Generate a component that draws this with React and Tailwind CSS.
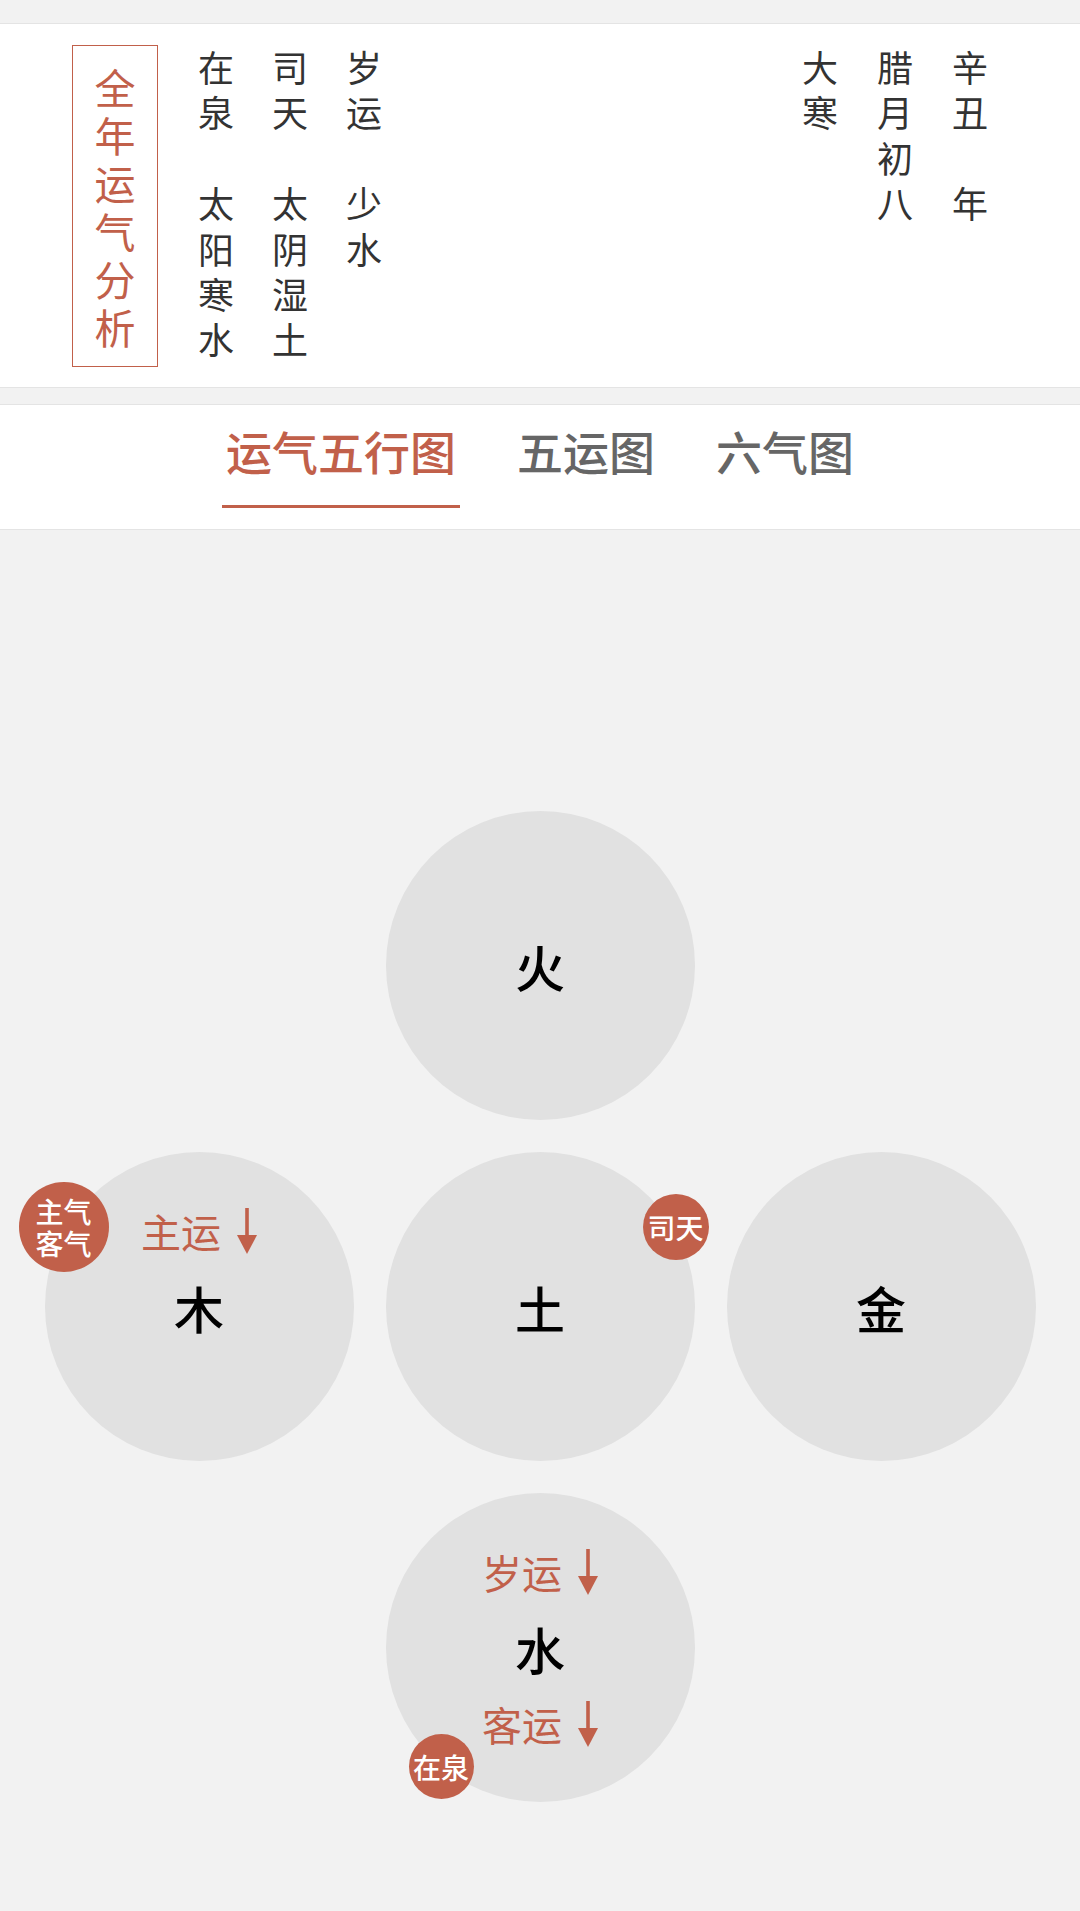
const FONT = { fontFamily: '"Noto Sans CJK SC", "Noto Sans", sans-serif' };

function TextColumn({ chars }) {
  return (
    <div className="flex w-[36px] flex-col items-center text-[36px] leading-[45.4px] text-[#333]">
      {chars.map((c, i) => (
        <span key={i} className="h-[45.4px]">
          {c}
        </span>
      ))}
    </div>
  );
}

function Arrow() {
  return (
    <svg width="20" height="46" viewBox="0 0 20 46" className="shrink-0">
      <line x1="10" y1="0" x2="10" y2="32" stroke="#c1604a" strokeWidth="3.6" />
      <polygon points="0,27 20,27 10,46" fill="#c1604a" />
    </svg>
  );
}

function Label({ text }) {
  return (
    <div className="flex items-center gap-[16px]">
      <span className="text-[40px] leading-none text-[#c1604a]">{text}</span>
      <Arrow />
    </div>
  );
}

function Badge({ className, children }) {
  return (
    <div
      className={
        'absolute flex items-center justify-center rounded-full bg-[#c1604a] text-center font-medium text-white ' +
        className
      }
    >
      {children}
    </div>
  );
}

function Element({ name, top, bottom, badge }) {
  return (
    <div className="relative flex h-[309px] w-[309px] flex-col items-center justify-center rounded-full bg-[#e1e1e1]">
      <div className="flex h-[76px] items-center justify-center">{top && <Label text={top} />}</div>
      <div className="flex h-[76px] items-center justify-center text-[50px] font-medium leading-none text-black">
        {name}
      </div>
      <div className="flex h-[76px] items-center justify-center">{bottom && <Label text={bottom} />}</div>
      {badge}
    </div>
  );
}

export default function App() {
  const tabs = ['运气五行图', '五运图', '六气图'];

  return (
    <div className="min-h-[1911px] w-[1080px] bg-[#f2f2f2]" style={FONT}>
      {/* year summary */}
      <div className="h-[23px]" />
      <div className="flex items-start border-y border-[#e4e4e4] bg-white pt-[21px] pb-[20px]">
        <div className="ml-[72px] flex h-[322px] w-[86px] flex-col items-center justify-center border border-[#c1604a] text-[41px] leading-[48px] text-[#c1604a]">
          {'全年运气分析'.split('').map((c, i) => (
            <span key={i}>{c}</span>
          ))}
        </div>
        <div className="ml-[40px] -mt-[1px] flex gap-[38px]">
          <TextColumn chars={['在', '泉', '', '太', '阳', '寒', '水']} />
          <TextColumn chars={['司', '天', '', '太', '阴', '湿', '土']} />
          <TextColumn chars={['岁', '运', '', '少', '水']} />
        </div>
        <div className="ml-auto mr-[92px] -mt-[1px] flex gap-[39px]">
          <TextColumn chars={['大', '寒']} />
          <TextColumn chars={['腊', '月', '初', '八']} />
          <TextColumn chars={['辛', '丑', '', '年']} />
        </div>
      </div>

      {/* tabs */}
      <div className="h-[16px]" />
      <div className="flex h-[126px] justify-center gap-[53px] border-y border-[#e4e4e4] bg-white pt-[22px]">
        {tabs.map((t, i) => (
          <div key={t} className="flex flex-col items-center">
            <span
              className={
                'px-[4px] text-[46px] font-medium leading-[46px] ' + (i === 0 ? 'text-[#c1604a]' : 'text-[#666]')
              }
            >
              {t}
            </span>
            {i === 0 && <div className="mt-[32px] h-[3px] w-full bg-[#c1604a]" />}
          </div>
        ))}
      </div>

      {/* five elements diagram */}
      <div className="flex justify-center pt-[281px] pb-[106px]">
        <div className="grid grid-cols-[309px_309px_309px] gap-x-[32px] gap-y-[32px]">
          <div />
          <Element name="火" />
          <div />
          <Element
            name="木"
            top="主运"
            badge={
              <Badge className="left-[-26px] top-[30px] h-[90px] w-[90px] text-[28px] leading-[32px]">
                主气
                <br />
                客气
              </Badge>
            }
          />
          <Element
            name="土"
            badge={
              <Badge className="left-[257px] top-[42px] h-[66px] w-[66px] text-[28px] leading-none">司天</Badge>
            }
          />
          <Element name="金" />
          <div />
          <Element
            name="水"
            top="岁运"
            bottom="客运"
            badge={
              <Badge className="left-[23px] top-[241px] h-[65px] w-[65px] text-[28px] leading-none">在泉</Badge>
            }
          />
          <div />
        </div>
      </div>
    </div>
  );
}
